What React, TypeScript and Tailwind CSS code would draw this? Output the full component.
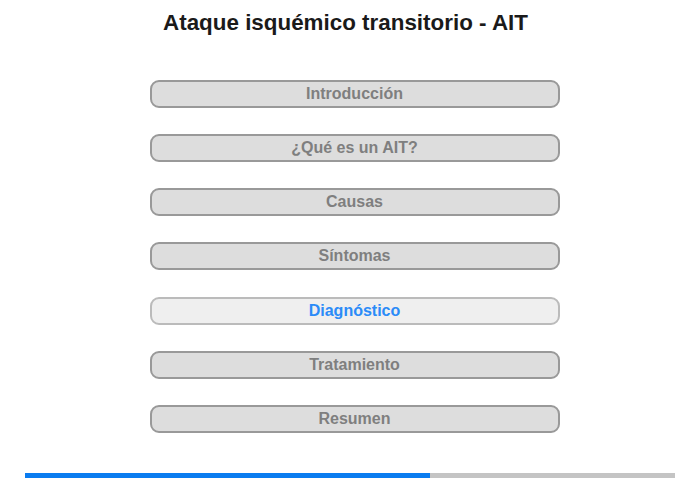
import React from 'react';

const sections = [
  'Introducción',
  '¿Qué es un AIT?',
  'Causas',
  'Síntomas',
  'Diagnóstico',
  'Tratamiento',
  'Resumen',
];

const ACTIVE = 4;

export default function App() {
  return (
    <div
      className="w-[700px] h-[480px] bg-white flex flex-col items-center overflow-hidden"
      style={{ fontFamily: '"Liberation Sans", Arial, sans-serif' }}
    >
      <h1 className="mt-[10px] mr-[9px] h-[26px] leading-[26px] text-[22.4px] font-bold text-[#1a1a1a]">
        Ataque isquémico transitorio - AIT
      </h1>

      <div className="mt-[44px] ml-[9px] flex flex-col gap-[26.17px]">
        {sections.map((s, i) => (
          <button
            key={s}
            className={
              i === ACTIVE
                ? 'w-[410px] h-[28px] rounded-[9px] border-2 border-[#bbbbbb] bg-[#efefef] text-[16px] font-bold text-[#2b8bf8] leading-none'
                : 'w-[410px] h-[28px] rounded-[9px] border-2 border-[#999999] bg-[#dddddd] text-[16px] font-bold text-[#7f7f7f] leading-none'
            }
          >
            {s}
          </button>
        ))}
      </div>

      <div className="mt-[40px] w-[650px] h-[5px] flex bg-[#c4c4c4]">
        <div className="h-full bg-[#0a7cf0]" style={{ width: `${(405 / 650) * 100}%` }} />
      </div>
    </div>
  );
}
